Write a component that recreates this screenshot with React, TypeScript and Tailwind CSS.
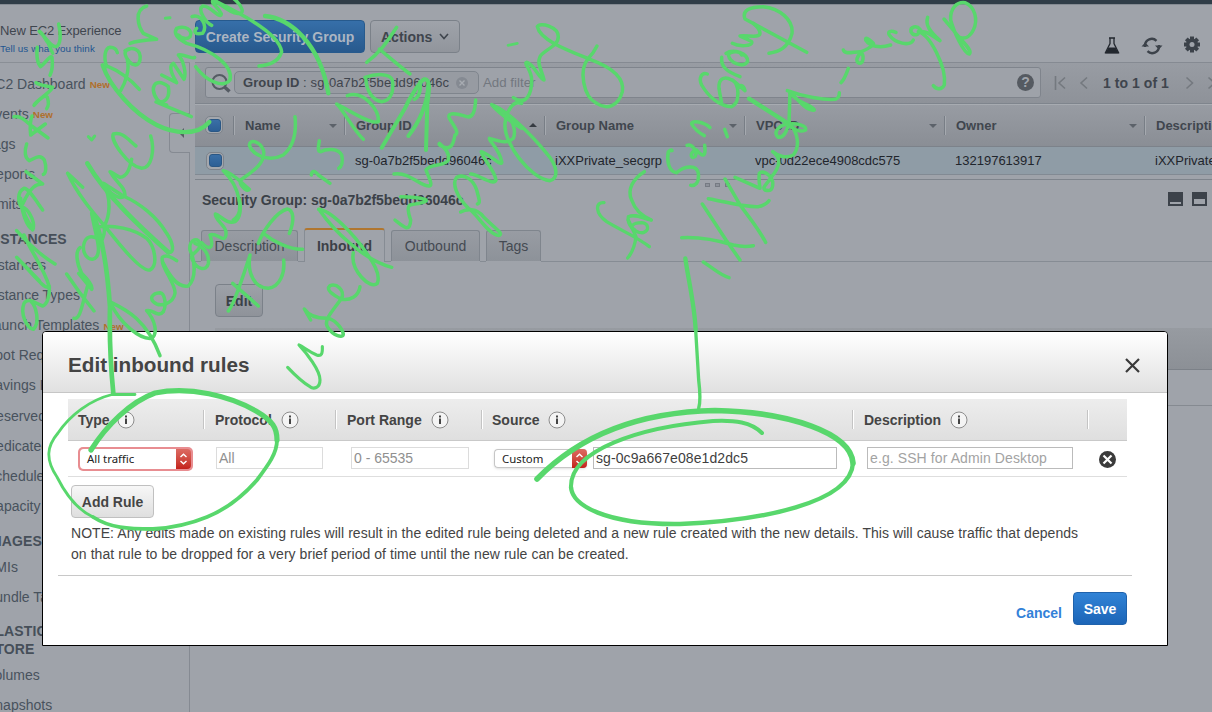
import React from "react";

const INK = "#58d76c";

function Item({ label, isNew }: { label: string; isNew?: boolean }) {
  return (
    <div className="flex h-[30.2px] items-center whitespace-nowrap text-[14px] text-[#48525d]">
      <span>{label}</span>
      {isNew && <span className="ml-1 mt-[3px] text-[9.8px] font-bold text-[#b0702c]">New</span>}
    </div>
  );
}

function Heading({ label, tall }: { label: string; tall?: boolean }) {
  return (
    <div
      className={
        (tall ? "h-[47.6px]" : "h-[30.2px]") +
        " flex items-center pt-2 text-[14px] font-bold leading-[18px] tracking-[0.1px] text-[#464f59] whitespace-pre"
      }
    >
      {label}
    </div>
  );
}

function Sidebar() {
  return (
    <aside className="flex w-[195px] shrink-0 overflow-hidden">
      <div className="w-[190px] shrink-0 overflow-hidden">
        <div className="h-[58px] border-b border-[#8a8f96] pt-[17px]">
          <div className="whitespace-nowrap text-[13px] leading-[18px] tracking-[-0.12px] text-[#3f464f]">New EC2 Experience</div>
          <div className="-mt-px whitespace-nowrap text-[9.8px] leading-[19px] tracking-[0.08px] text-[#215590]">Tell us what you think</div>
        </div>
        <nav className="-ml-[14px] pt-[6px]">
          <Item label="EC2 Dashboard" isNew />
          <Item label="Events" isNew />
          <Item label="Tags" />
          <Item label="Reports" />
          <Item label="Limits" />
          <Heading label="INSTANCES" />
          <Item label="Instances" />
          <Item label="Instance Types" />
          <Item label="Launch Templates" isNew />
          <Item label="Spot Requests" />
          <Item label="Savings Plans" />
          <Item label="Reserved Instances" />
          <Item label="Dedicated Hosts" />
          <Item label="Scheduled Instances" />
          <Item label="Capacity Reservations" />
          <Heading label="IMAGES" />
          <Item label="AMIs" />
          <Item label="Bundle Tasks" />
          <Heading label={"ELASTIC BLOCK\nSTORE"} tall />
          <Item label="Volumes" />
          <Item label="Snapshots" />
        </nav>
      </div>
    </aside>
  );
}

function Check() {
  return (
    <div className="flex h-[18px] w-[18px] items-center justify-center rounded-[5px] border border-[#7d838b] bg-[#a3a7ad]">
      <div className="h-[13px] w-[13px] rounded-[3px] border border-[#2a5785] bg-gradient-to-b from-[#3a6fa6] to-[#2c5f95]" />
    </div>
  );
}

function HeadCell({ label, arrow, w }: { label: string; arrow: "down" | "up" | null; w: string }) {
  return (
    <div className={w + " flex h-full shrink-0 items-center"}>
      <div className="h-[19px] w-px bg-[#787e86]" />
      <div className="h-[19px] w-px bg-[#a5a9af]" />
      <span className="ml-[10px] mt-[2px] grow whitespace-nowrap text-[13px] font-bold text-[#40464e]">{label}</span>
      {arrow === "down" && <span className="mr-[7px] mt-[2px] border-x-4 border-t-4 border-x-transparent border-t-[#5c626a]" />}
      {arrow === "up" && <span className="mr-[7px] border-x-4 border-b-4 border-x-transparent border-b-[#363b42]" />}
    </div>
  );
}

function Tab({ label, w, active }: { label: string; w: string; active?: boolean }) {
  return (
    <div
      className={
        w +
        (active
          ? " h-[34px] border-x border-t-2 border-x-[#868c94] border-t-[#b0762f] bg-[#9fa3aa] font-bold text-[#3b4047]"
          : " mb-px h-[31px] border border-b-0 border-[#7f858d] bg-gradient-to-b from-[#989ca3] to-[#8d9299] text-[#444a52]") +
        " flex shrink-0 items-center justify-center rounded-t-[3px] text-[14px]"
      }
    >
      {label}
    </div>
  );
}

function Main() {
  return (
    <main className="flex min-w-0 grow flex-col overflow-hidden">
      <div className="flex h-[58px] shrink-0 gap-[5px] border-b border-[#858a92] pt-[15px]">
        <div className="flex h-[33px] w-[170px] shrink-0 items-center justify-center whitespace-nowrap rounded border border-[#275a8d] bg-gradient-to-b from-[#366fa9] to-[#28598d] pt-px text-[14px] font-bold text-[#abb5c2]">
          Create Security Group
        </div>
        <div className="flex h-[33px] w-[90px] shrink-0 items-center rounded border border-[#7b8189] bg-gradient-to-b from-[#9fa3aa] to-[#91959c] pl-[10px] pt-px text-[14px] font-bold text-[#3f454d]">
          Actions
          <svg className="-mt-px ml-[7px]" width="10" height="7" viewBox="0 0 10 7" fill="none" stroke="#3f454d" strokeWidth="1.6"><path d="M1 1l4 4.5L9 1" /></svg>
        </div>
        <div className="grow" />
        <div className="flex shrink-0 items-start pr-[12px] pt-[14px]">
          <svg className="mt-[3px]" width="16" height="17" viewBox="0 0 16 17"><path d="M5 1h6M6 1.5v5L1.5 15.5h13L10 6.500v-5" fill="none" stroke="#22272e" strokeWidth="1.3" /><path d="M4.500 10.500h7l3.500 6H1z" fill="#22272e" /></svg>
          <svg className="ml-[21px] mt-[3px]" width="22" height="18" viewBox="0 0 22 18" fill="none" stroke="#3c424a" strokeWidth="2.400"><path d="M4 10V8.500a6.800 6.800 0 0 1 11.500-4.700M18 8v1.500a6.800 6.800 0 0 1-11.500 4.700" /><path d="M0.500 9.500h7.500L4.200 5.600zM14 8.500h7.500L17.800 12.400z" fill="#3c424a" stroke="none" /></svg>
          <svg className="ml-[21px] mt-[2px]" width="16" height="17" viewBox="-8 -8.500 16 17"><g fill="#3c424a"><path d="M-2-8h4v16h-4z" /><path d="M-2-8h4v16h-4z" transform="rotate(45)" /><path d="M-2-8h4v16h-4z" transform="rotate(90)" /><path d="M-2-8h4v16h-4z" transform="rotate(135)" /><circle r="6" /></g><circle r="2.500" fill="#9fa3aa" /></svg>
        </div>
      </div>

      <div className="flex h-[41px] shrink-0 items-center border-b border-[#7f858d] bg-gradient-to-b from-[#989ca3] to-[#8e9299] pl-[10px]">
        <div className="-mt-px flex h-[31px] w-[836px] shrink-0 items-center rounded-[3px] border border-[#7f848c] bg-[#9ea2a9] pr-[6px]">
          <svg className="ml-[4px]" width="22" height="20" viewBox="0 0 22 20" fill="none" stroke="#555b63"><circle cx="9.500" cy="9" r="7" strokeWidth="2" /><path d="M14.500 14l5 4.500" strokeWidth="3.500" /></svg>
          <div className="ml-[2px] flex h-[23px] w-[245px] items-center whitespace-nowrap rounded-[5px] border border-[#7f858d] bg-[#979ba2] pl-[8px] text-[13px] tracking-[0.1px] text-[#3f454d]">
            <b>Group ID</b>&nbsp;: sg-0a7b2f5bedd96046c
            <svg className="ml-[7px]" width="12" height="12" viewBox="0 0 12 12"><circle cx="6" cy="6" r="6" fill="#858a92" /><path d="M3.500 3.500l5 5m0-5l-5 5" stroke="#a8acb2" strokeWidth="1.400" /></svg>
          </div>
          <span className="ml-[4px] grow text-[13.300px] text-[#72777f]">Add filter</span>
          <span className="flex h-[17px] w-[17px] items-center justify-center rounded-full bg-[#555a61] text-[14px] font-bold text-[#a0a4ab]">?</span>
        </div>
        <svg className="ml-[13px] shrink-0" width="36" height="14" viewBox="0 0 36 14" fill="none" stroke="#74797f" strokeWidth="1.600"><path d="M1.500 0v14M11 1.500L5 7l6 5.500M33 1.500L27 7l6 5.500" /></svg>
        <span className="ml-[13px] shrink-0 whitespace-nowrap text-[14px] font-bold tracking-[0.050px] text-[#3f454d]">1 to 1 of 1</span>
        <svg className="ml-[16px] shrink-0" width="36" height="14" viewBox="0 0 36 14" fill="none" stroke="#74797f" strokeWidth="1.600"><path d="M1.500 1.500L7.500 7l-6 5.500M23.500 1.500L29.500 7l-6 5.500" /></svg>
      </div>

      <div className="flex h-[43px] shrink-0 items-center border-b border-[#7c828a] bg-gradient-to-b from-[#989ca3] to-[#8a8e95] shadow-[inset_0_1px_0_#a7abb1]">
        <div className="flex w-[38px] shrink-0 pl-[10px]"><Check /></div>
        <HeadCell label="Name" arrow="down" w="w-[111px]" />
        <HeadCell label="Group ID" arrow="up" w="w-[200px]" />
        <HeadCell label="Group Name" arrow="down" w="w-[200px]" />
        <HeadCell label="VPC ID" arrow="down" w="w-[200px]" />
        <HeadCell label="Owner" arrow="down" w="w-[200px]" />
        <HeadCell label="Description" arrow={null} w="w-[200px]" />
      </div>
      <div className="flex h-[28px] shrink-0 items-center border-b border-[#828a93] bg-[#8f9ca6] text-[13px] text-[#1f252c]">
        <div className="w-[160px] shrink-0 pl-[11px]"><Check /></div>
        <div className="w-[200px] shrink-0">sg-0a7b2f5bedd96046c</div>
        <div className="w-[200px] shrink-0">iXXPrivate_secgrp</div>
        <div className="w-[200px] shrink-0">vpc-0d22ece4908cdc575</div>
        <div className="w-[200px] shrink-0">132197613917</div>
        <div className="w-[200px] shrink-0">iXXPrivate_secgrp</div>
      </div>

      <div className="flex h-[14px] shrink-0 flex-col pt-[4px]">
        <div className="h-px bg-[#7e848c]" />
        <div className="flex gap-[5px] pl-[510px] pt-[3px]">
          <span className="h-[4px] w-[5px] border border-[#767b83] bg-[#8d929a]" />
          <span className="h-[4px] w-[5px] border border-[#767b83] bg-[#8d929a]" />
          <span className="h-[4px] w-[5px] border border-[#767b83] bg-[#8d929a]" />
        </div>
      </div>
      <div className="flex h-[39px] shrink-0 pl-[7px] pt-px">
        <span className="grow text-[14px] font-bold leading-[20px] tracking-[-0.040px] text-[#3b4148]">Security Group: sg-0a7b2f5bedd96046c</span>
        <span className="mr-[9px] mt-[2px] h-[14px] w-[15px] border-2 border-b-2 border-t-[10px] border-[#3c424a]" />
        <span className="mr-[5px] mt-[2px] h-[14px] w-[15px] border-2 border-t-[7px] border-[#3c424a]" />
      </div>
      <div className="flex h-[34px] shrink-0 items-end">
        <div className="h-px w-[6px] bg-[#868c94]" />
        <Tab label="Description" w="w-[97px]" />
        <div className="h-px w-[6px] bg-[#868c94]" />
        <Tab label="Inbound" w="w-[81px]" active />
        <div className="h-px w-[6px] bg-[#868c94]" />
        <Tab label="Outbound" w="w-[89px]" />
        <div className="h-px w-[6px] bg-[#868c94]" />
        <Tab label="Tags" w="w-[55px]" />
        <div className="h-px grow bg-[#868c94]" />
      </div>
      <div className="ml-[20px] mt-[22px] flex h-[33px] w-[48px] shrink-0 items-center justify-center rounded border border-[#7b8189] bg-gradient-to-b from-[#9da1a8] to-[#8f939a] pt-px text-[14px] font-bold text-[#3b4148]">
        Edit
      </div>
      <div className="ml-[20px] mt-[11px] h-[42px] shrink-0 border-b border-[#7c8188] bg-gradient-to-b from-[#979ba1] to-[#8c9096]" />
      <div className="ml-[20px] h-[36px] shrink-0 border-b border-[#858a91]" />
    </main>
  );
}

function Info() {
  return (
    <svg className="shrink-0" width="18" height="18" viewBox="0 0 18 18">
      <circle cx="9" cy="9" r="8" fill="#f4f4f4" stroke="#8d8d8d" />
      <path d="M9 4.500v1.900M9 7.500v5.500" fill="none" stroke="#444" strokeWidth="2" />
    </svg>
  );
}

function RuleHead({ label, w, gap }: { label: string; w: string; gap: string }) {
  return (
    <div className={w + " flex shrink-0 items-center text-[14px] font-bold text-[#444]"}>
      <span className={gap + " pt-px"}>{label}</span>
      <Info />
    </div>
  );
}

function Divider() {
  return <div className="h-[19px] w-[2px] shrink-0 border-l border-[#c4c4c4] bg-white" />;
}

function Stepper({ h }: { h: string }) {
  return (
    <div className={h + " flex w-[15px] shrink-0 items-center justify-center rounded-r-[4px] bg-gradient-to-b from-[#dc6a62] to-[#c41f1a]"}>
      <svg width="9" height="12" viewBox="0 0 9 12" fill="none" stroke="#fff" strokeWidth="1.400"><path d="M1.500 4l3-2.800 3 2.800M1.500 8l3 2.800 3-2.800" /></svg>
    </div>
  );
}

function Modal() {
  return (
    <section className="absolute left-[42px] top-[331px] flex h-[315px] w-[1126px] flex-col rounded-t-[4px] border border-black bg-white">
      <header className="flex h-[61px] shrink-0 items-center rounded-t-[3px] border-b border-[#c6c6c6] bg-gradient-to-b from-white to-[#e1e1e1] pl-[25px] pr-[27px] pt-[5px]">
        <h1 className="grow text-[20.700px] font-bold tracking-[-0.010px] text-[#444]">Edit inbound rules</h1>
        <svg className="mt-px" width="15" height="15" viewBox="0 0 15 15" stroke="#3a3a3a" strokeWidth="2.200"><path d="M1 1l13 13M14 1L1 14" /></svg>
      </header>
      <div className="ml-[25px] mt-[6px] flex h-[42px] w-[1059px] shrink-0 items-center border-b border-[#c9c9c9] bg-gradient-to-b from-[#ededed] to-[#dfdfdf] pl-[10px]">
        <RuleHead label="Type" w="w-[125px]" gap="w-[39px]" />
        <Divider />
        <RuleHead label="Protocol" w="w-[130px] pl-[10px]" gap="w-[66px]" />
        <Divider />
        <RuleHead label="Port Range" w="w-[144px] pl-[10px]" gap="w-[84px]" />
        <Divider />
        <RuleHead label="Source" w="w-[369px] pl-[9px]" gap="w-[56px]" />
        <Divider />
        <RuleHead label="Description" w="w-[233px] pl-[10px]" gap="w-[86px]" />
        <Divider />
      </div>
      <div className="ml-[25px] flex h-[36px] w-[1059px] shrink-0 items-center border-b border-[#dedede] pl-[10px]">
        <div className="flex h-[24px] w-[115px] shrink-0 rounded-[5px] bg-[#e88d91] p-[2px]">
          <div className="flex grow items-center rounded-l-[4px] bg-white pl-[7px] text-[11.400px] text-[#222] font-['Noto_Sans',sans-serif]">All traffic</div>
          <Stepper h="h-[20px]" />
        </div>
        <div className="-mt-px ml-[23px] flex h-[22px] w-[107px] shrink-0 items-center border border-[#dcdcdc] pl-[2px] text-[14px] text-[#909090]">All</div>
        <div className="-mt-px ml-[28px] flex h-[22px] w-[118px] shrink-0 items-center border border-[#dcdcdc] pl-[2px] text-[14px] text-[#909090]">0 - 65535</div>
        <div className="ml-[25px] flex h-[19px] w-[93px] shrink-0 rounded-[4px] border border-[#c6c6c6] border-r-0 shadow-sm">
          <div className="flex grow items-center pl-[7px] text-[11.400px] text-[#222] font-['Noto_Sans',sans-serif]">Custom</div>
          <Stepper h="-my-px h-[19px]" />
        </div>
        <div className="-mt-px ml-[6px] flex h-[22px] w-[244px] shrink-0 items-center border border-[#bbb] pl-[2px] pt-px text-[14px] tracking-[0.090px] text-[#3f3f3f]">sg-0c9a667e08e1d2dc5</div>
        <div className="-mt-px ml-[30px] flex h-[22px] w-[206px] shrink-0 items-center border border-[#bbb] pl-[2px] pt-px text-[14px] tracking-[0.100px] text-[#a3a3a3]">e.g. SSH for Admin Desktop</div>
        <svg className="ml-[26px] mt-[2px] shrink-0" width="17" height="17" viewBox="0 0 17 17"><circle cx="8.500" cy="8.500" r="8.500" fill="#3b3b3b" /><path d="M4.500 4.500l8 8m0-8l-8 8" stroke="#fff" strokeWidth="2.200" /></svg>
      </div>
      <div className="ml-[28px] mt-[8px] flex h-[33px] w-[83px] shrink-0 items-center justify-center rounded border border-[#c0c0c0] bg-gradient-to-b from-[#f7f7f7] to-[#dfdfdf] pt-px text-[14px] font-bold text-[#444]">
        Add Rule
      </div>
      <p className="ml-[28px] mt-[5px] h-[42px] shrink-0 whitespace-pre text-[14px] leading-[21px] tracking-[0.056px] text-[#444]">
        {"NOTE: Any edits made on existing rules will result in the edited rule being deleted and a new rule created with the new details. This will cause traffic that depends\non that rule to be dropped for a very brief period of time until the new rule can be created."}
      </p>
      <div className="ml-[15px] mt-[10px] w-[1074px] border-t border-[#c8c8c8]" />
      <div className="flex justify-end pr-[40px] pt-[16px]">
        <span className="mr-[11px] mt-[11px] text-[14px] font-bold leading-[20px] text-[#3281d8]">Cancel</span>
        <span className="flex h-[33px] w-[54px] items-center justify-center rounded border border-[#1f62ac] bg-gradient-to-b from-[#3183d6] to-[#1c65b7] pt-px text-[14px] font-bold text-white">Save</span>
      </div>
    </section>
  );
}

function Ink() {
  return (
    <svg
      className="pointer-events-none absolute left-0 top-0"
      width="1212"
      height="712"
      viewBox="0 0 1212 712"
      fill="none"
      stroke={INK}
      strokeWidth="4"
      strokeLinecap="round"
      strokeLinejoin="round"
    >
      {/* left column: words at the top */}
      <g transform="scale(.33333)" strokeWidth="10.500">
        <path d="M176,72 C184,105 182,135 168,140 C150,140 135,108 118,94 C130,100 135,120 145,130 L158,160" />
        <path d="M112,142 C108,165 112,190 122,200 C135,190 150,165 156,172 C158,190 158,210 150,226" />
        <path d="M108,248 C120,258 150,258 158,262 C150,280 110,300 102,316 C115,300 135,282 142,292 C146,305 145,320 140,326" />
        <path d="M42,350 C62,348 75,360 95,378 L144,414 M96,348 C88,370 90,385 92,405 M136,372 L92,405" />
        <path d="M440,18 C400,30 415,80 430,100 L470,118 C440,120 410,122 390,130" />
        <path d="M375,152 C395,140 425,145 420,180 C415,200 400,198 388,185 C372,165 370,150 388,148" />
        <path d="M320,200 C310,170 315,145 330,142 C345,142 350,150 352,158 M418,268 C390,235 350,210 325,200 M382,180 C390,210 375,250 362,272" />
        <path d="M308,196 C330,260 400,340 470,375 C520,400 590,410 628,366" strokeWidth="13" />
        <path d="M496,55 L510,53 M265,410 L275,420 L284,408" strokeWidth="9" />
        <path d="M574,350 L468,306 C500,310 510,290 505,260 C480,240 460,245 460,270 C462,290 475,310 500,315" />
        <path d="M485,225 L530,248 C510,215 508,195 520,190 L552,238 C560,220 550,180 535,165 C550,160 575,180 584,172" />
        <path d="M587,200 C620,245 670,265 690,240 C700,200 640,150 560,130 C530,115 520,100 530,85 C555,75 580,90 570,110 C560,120 545,115 535,105" />
        <path d="M576,50 C600,40 625,75 608,100 C585,105 580,95 590,85" />
        <path d="M635,76 C620,70 590,30 608,18 C630,15 660,60 664,42 C655,20 630,10 640,0 C660,10 690,40 710,40 C740,45 725,15 700,-5" />
        <path d="M640,0 C680,20 720,40 760,65 C800,90 840,120 845,155 C835,190 800,195 777,198" />
        <path d="M700,660 C735,640 720,560 670,512 C700,520 720,545 748,568 C740,580 715,550 722,540 C750,520 800,490 790,450 C780,425 750,415 748,435 C755,460 800,490 850,465 C880,440 890,400 885,350" />
      </g>

      {/* left column: middle words */}
      <g transform="translate(0 120) scale(.33333)" strokeWidth="10.500">
        <path d="M80,72 C72,95 75,115 88,122 C105,115 120,100 133,120 C140,140 138,160 130,163" />
        <path d="M78,155 L128,192 C110,190 92,200 68,252 M128,270 C100,230 85,205 72,205 C52,215 52,245 66,265" />
        <path d="M62,235 C68,300 92,335 100,325 C105,300 82,265 68,262 C72,290 90,310 98,330" />
        <path d="M50,332 C75,360 120,405 165,432 M72,345 C90,390 130,440 148,500 C135,510 110,475 50,412 L118,482" />
        <path d="M148,500 C150,530 140,555 128,558 C105,550 85,530 72,550 C60,580 80,625 100,628 C120,610 110,560 92,543" />
        <path d="M452,48 C465,90 455,145 425,145 C385,140 330,60 340,42 C370,35 385,60 408,78" />
        <path d="M395,118 C388,150 380,170 360,172 C345,165 335,155 330,155 C350,190 375,200 375,225 C365,240 340,230 320,205" />
        <path d="M203,160 L248,202 M203,160 C240,240 300,300 340,350 C380,400 430,455 450,450 C475,435 465,380 440,355 C400,325 340,315 295,320" />
        <path d="M262,130 C320,230 430,330 505,397" strokeWidth="14" />
        <path d="M505,397 C525,400 520,370 500,340 C470,290 420,250 370,228 C340,210 320,195 310,190 C335,235 330,290 312,318 C318,345 305,360 300,372" />
        <path d="M275,280 C285,340 305,390 290,410 C275,430 250,410 250,380 C255,345 275,345 300,360" />
        <path d="M240,383 C225,395 230,430 245,460 C265,480 280,500 275,508 L236,460 M200,462 C225,500 255,540 282,573 M262,500 C245,560 240,600 222,595" />
      </g>

      {/* left column: lower words */}
      <g transform="translate(0 200) scale(.33333)" strokeWidth="10.500">
        <path d="M278,42 C300,90 320,180 330,320 C328,400 330,480 340,580" strokeWidth="14" />
        <path d="M335,308 C380,330 440,360 480,467" />
        <path d="M332,310 C360,370 420,420 455,415 C475,400 465,360 440,332 C455,325 475,355 490,335 C500,315 495,280 480,278 C455,280 450,295 460,305 C480,325 520,310 525,280 C528,250 480,200 487,172 C500,160 520,175 530,182" />
        <path d="M490,190 C505,220 530,265 565,258 C590,235 585,180 570,150 C565,115 600,110 600,135 C600,155 570,160 575,175 C590,210 620,215 625,190 C630,155 600,135 585,130" />
        <path d="M605,128 C625,150 645,150 630,105 C650,95 680,140 678,95 C675,75 645,60 646,42 C660,45 680,75 705,65 C722,55 724,20 718,0" />
        <path d="M868,100 C885,60 880,30 862,27 C830,35 790,90 775,130 M790,100 C820,125 870,150 908,148" />
        <path d="M851,180 C855,220 840,260 805,265 C765,265 740,220 750,165 C735,210 705,310 685,333 M698,250 L775,318" />
      </g>

      {/* middle words and arrow */}
      <g transform="translate(190 0) scale(.33333)" strokeWidth="10.500">
        <path d="M225,48 C300,55 390,130 415,280" strokeWidth="13" />
        <path d="M388,422 C385,440 382,455 392,455 C410,445 445,445 455,465 C460,485 455,500 446,505 M364,525 C366,510 375,512 385,525 L420,550" />
        <path d="M620,82 C600,110 580,150 530,187 M568,147 C590,165 630,200 660,222" />
        <path d="M525,232 C560,220 600,220 607,240 C612,270 605,302 575,305 C545,300 530,270 528,240" />
        <path d="M520,418 C490,390 460,330 440,312 C470,325 540,375 565,365 C570,330 520,270 472,287" />
        <path d="M575,443 L645,325 C660,290 690,245 702,238 C722,235 718,270 712,310 L708,450 M655,408 C685,370 715,310 715,250" strokeWidth="12" />
        <path d="M673,298 C690,290 692,265 690,245" />
        <path d="M857,300 C855,330 850,355 830,350 C800,340 770,335 778,355 C790,375 810,400 795,405 C790,430 785,445 770,443 C750,440 745,432 748,430 C765,445 780,460 775,480 C765,500 720,490 708,510 C715,530 730,555 718,558 C690,560 660,515 612,522" />
        <path d="M615,660 C640,680 660,700 662,660 C655,640 650,620 660,615 C690,610 720,605 705,598 C680,590 650,590 632,590" />
      </g>
      <g transform="translate(270 180) scale(.33333)" strokeWidth="10.500">
        <path d="M146,88 C180,90 250,160 290,220 C320,260 330,290 322,310 C300,330 240,270 250,218 M150,92 C190,150 280,240 365,262" />
        <path d="M270,320 C265,350 240,362 215,358 C190,345 165,330 180,317 C200,310 225,330 215,355 C190,390 160,420 172,440 C190,470 220,475 220,462 C215,440 190,415 170,415 C140,415 115,405 103,387 L122,420" />
        <path d="M157,500 C158,520 155,530 140,525 C115,515 100,500 87,495 C110,520 150,570 150,600 C150,625 130,628 120,620 C95,605 70,580 53,562" strokeWidth="9.500" />
      </g>
      <g transform="translate(450 0) scale(.33333)" strokeWidth="10.500">
        <path d="M32,636 C50,625 80,625 100,650 C140,690 160,700 148,706 C120,710 80,640 55,625 C20,590 5,550 20,532 C45,520 70,540 80,570 C88,600 92,610 82,612" />
        <path d="M62,522 C80,520 130,560 138,540 C135,510 90,465 94,455 C115,460 160,505 155,485 C150,450 115,420 118,415 C140,420 170,435 190,415 C200,390 185,350 165,345" />
        <path d="M125,314 C170,330 240,400 290,460 C325,500 325,535 300,542 C240,535 160,430 165,370 C170,330 190,300 215,310 M125,314 C150,345 200,375 215,385" />
        <path d="M190,293 C230,320 245,280 245,240 C245,210 220,190 230,187 C250,190 270,240 282,240 C275,210 260,190 270,170 C280,150 325,140 325,110 C325,80 270,65 262,80 C270,120 350,150 420,178 C480,200 525,230 517,275 C505,320 470,330 440,310 C400,290 385,210 415,175 C425,165 435,150 441,138" />
        <path d="M174,136 L202,130" strokeWidth="8" />
        <path d="M583,515 C550,535 530,570 545,600 C555,630 580,650 604,660" />
        <path d="M655,462 C655,450 665,448 666,452 M655,455 C650,480 655,515 680,518 C700,500 740,490 745,520 C748,550 735,558 722,556" />
        <path d="M711,436 C725,430 745,455 735,470 C720,480 718,455 740,450 C765,480 767,460 764,436 M780,383 C760,365 725,360 725,372 C735,390 750,400 763,407 M824,388 L832,410" />
      </g>

      {/* right words */}
      <g transform="translate(690 0) scale(.33333)" strokeWidth="10.500">
        <path d="M52,222 C35,215 25,235 35,255 C55,290 90,320 125,320 C150,310 150,250 125,240 C100,225 85,240 87,265 C90,290 95,300 95,312 M128,240 L165,272 C160,252 150,255 148,262" />
        <path d="M95,172 C92,200 110,215 150,230 M108,160 C130,145 175,160 173,185 C160,205 120,190 115,165 C120,155 150,150 155,165" />
        <path d="M127,130 C145,140 190,140 185,125 C170,115 150,110 150,108 C170,105 210,115 210,100 C210,85 195,75 190,70" />
        <path d="M350,157 L165,57 C155,30 180,20 220,20 C270,25 310,60 306,100 C295,145 265,155 237,160" />
        <path d="M177,296 L297,372" strokeWidth="13" />
        <path d="M297,372 C320,370 350,375 347,390 C325,400 310,385 290,372 C260,380 250,400 265,412 C285,412 290,390 297,372 L300,275" />
        <path d="M292,272 C340,290 400,300 435,298 C448,295 448,285 448,278 M300,278 C320,310 370,315 373,330 C350,335 320,295 305,280" />
        <path d="M300,372 C325,400 330,440 310,465 C290,475 265,470 248,455 C275,475 270,500 245,530 C230,555 215,560 225,570 C240,575 250,570 248,545 C240,520 215,510 208,520 C205,540 210,560 210,565 L135,532" />
        <path d="M105,537 L150,615 C180,655 205,685 227,727 M55,596 C110,605 160,622 205,620 C225,615 232,610 237,602 M37,612 L108,720 L150,780 M-25,713 C30,710 80,720 130,735 C160,742 175,740 190,737 M40,786 C70,805 90,825 117,833" />
        <path d="M475,205 C468,225 462,240 453,248 M460,150 C465,165 490,155 510,155 C525,165 520,190 508,190 C495,185 500,170 515,155 C535,145 555,135 550,130 C535,115 525,110 527,120 C540,140 570,145 602,135" />
        <path d="M618,97 C600,90 592,95 598,105 C615,130 660,140 670,120 M690,88 C680,75 660,80 663,95 C670,110 690,105 685,95 C720,105 770,200 763,255 C755,270 740,270 730,257 M713,52 C705,75 720,95 750,122 C730,110 710,90 690,95" />
        <path d="M762,57 L790,90 C810,120 850,150 838,162 C820,160 790,90 782,60 C780,25 800,5 825,8 C855,20 865,60 850,90 C840,110 825,118 810,112" />
      </g>
      <g transform="translate(580 180) scale(.33333)" strokeWidth="10">
        <path d="M72,68 C45,65 45,100 80,125 C120,150 170,170 208,200 M145,120 L168,170 C165,195 155,220 143,234" />
        <path d="M145,110 C165,100 190,115 212,120 M145,110 C140,135 165,160 190,158 C210,150 205,130 185,128 C160,128 145,140 165,150" />
        <path d="M316,235 C325,300 343,370 347,450" strokeWidth="13" />
        <path d="M347,450 L356,600 C361,640 362,665 356,685" />
      </g>

      {/* circled fields */}
      <path d="M135,394.500 L112,394.500 C90,400 70,415 58,433 C47,446 45,459 57,477 C67,497 80,511 93,517" strokeWidth="2.800" />
      <path d="M93,517 C110,528 128,529 153,529 C172,528 190,524 207,517 C229,508 244,495 257,480 C269,464 277,453 277,440" strokeWidth="3.800" />
      <path d="M91,450 C106,426 130,402 155,393 C190,386 230,396 256,411 C273,421 277,428 277,440" strokeWidth="5.200" />
      <path d="M537,479 C580,435 640,412 715,410.500 C790,412 851,433 853,463" strokeWidth="5.600" />
      <path d="M853,463 C851,503 760,521 680,524 C605,525 572,505 571,487" strokeWidth="4.400" />
      <path d="M571,487 C570,450 640,427 713,421 C735,420 751,422 762,433" strokeWidth="4" />
    </svg>
  );
}

export default function App() {
  return (
    <div className="relative flex h-[712px] w-[1212px] flex-col overflow-hidden bg-[#9fa3aa] font-['Liberation_Sans',Arial,sans-serif]">
      <div className="h-[5px] shrink-0 border-b border-[#858b93] bg-[#303d48]" />
      <div className="flex min-h-0 grow">
        <Sidebar />
        <Main />
      </div>
      <div className="absolute left-[189px] top-[63px] h-[50px] w-px bg-[#858a92]" />
      <div className="absolute left-[189px] top-[153px] h-[559px] w-px bg-[#858a92]" />
      <div className="absolute left-[169px] top-[113px] flex h-[40px] w-[21px] items-center justify-center rounded-l-[4px] border border-r-0 border-[#858a92] bg-[#9fa3aa]">
        <span className="mr-[-2px] border-y-[5px] border-r-[5px] border-y-transparent border-r-[#555b63]" />
      </div>
      <Modal />
      <Ink />
    </div>
  );
}
